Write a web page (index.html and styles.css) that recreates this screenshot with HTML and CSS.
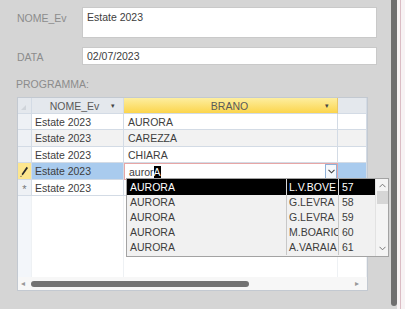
FILE: index.html
```html
<!doctype html>
<html lang="it">
    <head>
        <meta charset="UTF-8" />
        <title>EVENTI</title>
        <link rel="stylesheet" href="styles.css">
    </head>
    <body>
        <div class="window">
            <div class="form">
                <div class="field">
                    <label class="field-label">NOME_Ev</label>
                    <div class="box box-tall">Estate 2023</div>
                </div>
                <div class="field field-date">
                    <label class="field-label">DATA</label>
                    <div class="box">02/07/2023</div>
                </div>
                <div class="caption">PROGRAMMA:</div>

                <div class="sheet">
                    <div class="row head">
                        <div class="cell sel sel-head"><span class="corner"></span></div>
                        <div class="cell hcell">
                            <span class="htext">NOME_Ev</span><span class="harrow">▾</span>
                        </div>
                        <div class="cell hcell hot">
                            <span class="htext">BRANO</span><span class="harrow">▾</span>
                        </div>
                        <div class="cell hcell"></div>
                    </div>
                    <div class="row r16">
                        <div class="cell sel"></div>
                        <div class="cell">Estate 2023</div>
                        <div class="cell">AURORA</div>
                        <div class="cell"></div>
                    </div>
                    <div class="row r17 alt">
                        <div class="cell sel"></div>
                        <div class="cell">Estate 2023</div>
                        <div class="cell">CAREZZA</div>
                        <div class="cell"></div>
                    </div>
                    <div class="row r16">
                        <div class="cell sel"></div>
                        <div class="cell">Estate 2023</div>
                        <div class="cell">CHIARA</div>
                        <div class="cell"></div>
                    </div>
                    <div class="row r17 current">
                        <div class="cell sel sel-edit">
                            <svg width="9" height="11" viewBox="0 0 9 11">
                                <path d="M6.6 0.8 L8 2 L3.4 8.4 L1.8 9.4 L2 7.4 Z" fill="#2b2b2b"/>
                                <path d="M0.6 10.4 L1.4 10.4" stroke="#2b2b2b" stroke-width="1"/>
                            </svg>
                        </div>
                        <div class="cell picked">Estate 2023</div>
                        <div class="cell editing">
                            <span class="typed">auror<span class="caret">A</span></span>
                            <span class="drop-btn">
                                <svg width="7" height="5" viewBox="0 0 7 5"><path d="M0.5 0.8 L3.5 3.8 L6.5 0.8" fill="none" stroke="#444" stroke-width="1.1"/></svg>
                            </span>
                        </div>
                        <div class="cell picked"></div>
                    </div>
                    <div class="row r16">
                        <div class="cell sel star">*</div>
                        <div class="cell">Estate 2023</div>
                        <div class="cell"></div>
                        <div class="cell"></div>
                    </div>
                    <div class="row filler">
                        <div class="cell sel"></div>
                        <div class="cell"></div>
                        <div class="cell"></div>
                        <div class="cell"></div>
                    </div>
                    <div class="hscroll">
                        <span class="harr">◂</span>
                        <div class="htrack"><div class="hthumb"></div></div>
                        <span class="harr">▸</span>
                    </div>

                    <div class="dropdown">
                        <div class="dd-rows">
                            <div class="dd-row active"><span>AURORA</span><span>L.V.BOVE</span><span>57</span></div>
                            <div class="dd-row"><span>AURORA</span><span>G.LEVRA</span><span>58</span></div>
                            <div class="dd-row"><span>AURORA</span><span>G.LEVRA</span><span>59</span></div>
                            <div class="dd-row"><span>AURORA</span><span>M.BOARIO</span><span>60</span></div>
                            <div class="dd-row"><span>AURORA</span><span>A.VARAIA</span><span>61</span></div>
                        </div>
                        <div class="dd-scroll">
                            <svg width="7" height="5" viewBox="0 0 7 5"><path d="M0.5 4.2 L3.5 1.2 L6.5 4.2" fill="none" stroke="#777" stroke-width="1"/></svg>
                            <div class="dd-thumb"></div>
                            <svg class="dd-down" width="7" height="5" viewBox="0 0 7 5"><path d="M0.5 0.8 L3.5 3.8 L6.5 0.8" fill="none" stroke="#777" stroke-width="1"/></svg>
                        </div>
                    </div>
                </div>
            </div>
            <div class="vscroll"></div>
            <div class="edge"><span class="edge-line"></span></div>
        </div>
    </body>
</html>
```

FILE: styles.css
```css
body {
    margin: 0;
    font-family: "Liberation Sans", Arial, sans-serif;
    font-size: 10.5px;
    color: #3d3d3d;
    background-color: #d5d5d5;
    overflow: hidden;
}
.window {
    display: flex;
    height: 309px;
}
.form {
    width: 373px;
    padding: 7px 0 0 17px;
}
.field {
    display: flex;
}
.field-date {
    margin-top: 9px;
}
.field-label {
    width: 65px;
    color: #8c8c8c;
    padding-top: 5px;
    line-height: 12px;
}
.field-date .field-label {
    padding-top: 4px;
}
.box {
    width: 295px;
    height: 18px;
    box-sizing: border-box;
    background-color: #fff;
    border: 1px solid #c9c9c9;
    padding: 2px 0 0 4px;
    line-height: 12px;
}
.box-tall {
    height: 31px;
    padding-top: 3px;
}
.caption {
    margin: 13px 0 7px -1px;
    line-height: 12px;
    color: #8c8c8c;
}

/* Datasheet */
.sheet {
    position: relative;
    width: 351px;
    height: 194px;
    box-sizing: border-box;
    border: 1px solid #c3c9d1;
    background-color: #fff;
    display: flex;
    flex-direction: column;
}
.row {
    display: grid;
    grid-template-columns: 14px 92px 214px 29px;
    flex-shrink: 0;
}
.cell {
    box-sizing: border-box;
    border-right: 1px solid #d3dbe5;
    border-bottom: 1px solid #d3dbe5;
    padding-left: 3px;
    white-space: nowrap;
    overflow: hidden;
    display: flex;
    align-items: center;
}
.cell:nth-child(3) {
    padding-left: 4px;
}
.head {
    height: 16px;
}
.r16 {
    height: 16px;
}
.r17 {
    height: 17px;
}
.alt .cell {
    background-color: #f2f2f2;
}
.sel {
    background-color: #eef1f5;
    padding: 0;
    justify-content: center;
}
.alt .sel {
    background-color: #eef1f5;
}
.sel-head {
    position: relative;
    background-color: #e4e8ed;
}
.corner {
    position: absolute;
    left: 3px;
    bottom: 3px;
    width: 0;
    height: 0;
    border-left: 5px solid transparent;
    border-bottom: 5px solid #cfd4da;
}
.hcell {
    background-color: #e4e8ed;
    color: #5a5a5a;
    padding: 0;
}
.hot {
    background: linear-gradient(#fdeea0, #fcd54c);
    border-right-color: #e8c769;
}
.htext {
    flex: 1;
    text-align: center;
    padding-left: 6px;
}
.harrow {
    width: 12px;
    font-size: 7px;
    color: #444;
}
.current .cell {
    height: 17px;
}
.sel-edit {
    background-color: #fde68e;
}
.picked {
    background-color: #a9cbee;
}
.editing {
    position: relative;
    border: 1px solid #e7a6a6;
    background-color: #fff;
    padding-right: 0;
}
.typed {
    flex: 1;
}
.caret {
    background-color: #000;
    color: #fff;
}
.drop-btn {
    width: 12px;
    height: 15px;
    box-sizing: border-box;
    border: 1px solid #8fb1d8;
    background-color: #f5f8fc;
    display: flex;
    align-items: center;
    justify-content: center;
}
.star {
    color: #777;
    font-size: 11px;
    padding-top: 3px;
}
.filler {
    flex: 1;
}
.filler .cell {
    border-bottom: none;
    border-right-color: #eef1f4;
}
.filler .sel {
    background-color: #f3f6fa;
}
.hscroll {
    height: 13px;
    flex-shrink: 0;
    display: flex;
    align-items: center;
    background-color: #f7f7f7;
    padding: 0 4px 0 3px;
    gap: 2px;
}
.harr {
    font-size: 8px;
    color: #999;
    width: 8px;
}
.htrack {
    flex: 1;
    height: 6px;
}
.hthumb {
    width: 218px;
    height: 6px;
    border-radius: 3px;
    background-color: #727272;
}

/* Combo list */
.dropdown {
    position: absolute;
    left: 108px;
    top: 80px;
    width: 263px;
    height: 79px;
    box-sizing: border-box;
    border: 1px solid #a3a3a3;
    background-color: #f1f1f1;
    display: flex;
    z-index: 5;
}
.dd-rows {
    flex: 1;
}
.dd-row {
    display: grid;
    grid-template-columns: 160px 52px 1fr;
    height: 15px;
    line-height: 15px;
}
.dd-row.active {
    height: 16px;
    line-height: 16px;
    background-color: #000;
    color: #fff;
}
.dd-row span {
    padding-left: 3px;
    overflow: hidden;
    white-space: nowrap;
    border-right: 1px solid #c8c8c8;
}
.dd-row span:nth-child(2) {
    padding-left: 2px;
}
.dd-row span:last-child {
    border-right: none;
}
.dd-row.active span {
    border-right-color: #d8d8d8;
}
.dd-scroll {
    width: 12px;
    background-color: #f4f4f4;
    border-left: 1px solid #e2e2e2;
    display: flex;
    flex-direction: column;
    align-items: center;
    padding-top: 4px;
}
.dd-thumb {
    width: 11px;
    height: 13px;
    margin-top: 3px;
    background-color: #d6d6d6;
}
.dd-down {
    margin-top: auto;
    margin-bottom: 5px;
}

/* Window edge */
.vscroll {
    width: 6px;
    margin-left: 1px;
    height: 306px;
    background-color: #6f6f6f;
    border-radius: 0 0 3px 3px;
}
.edge {
    flex: 1;
    background-color: #f7f3f4;
    padding-left: 3px;
}
.edge-line {
    display: block;
    width: 1px;
    height: 100%;
    background-color: #dbbcc4;
}
```
